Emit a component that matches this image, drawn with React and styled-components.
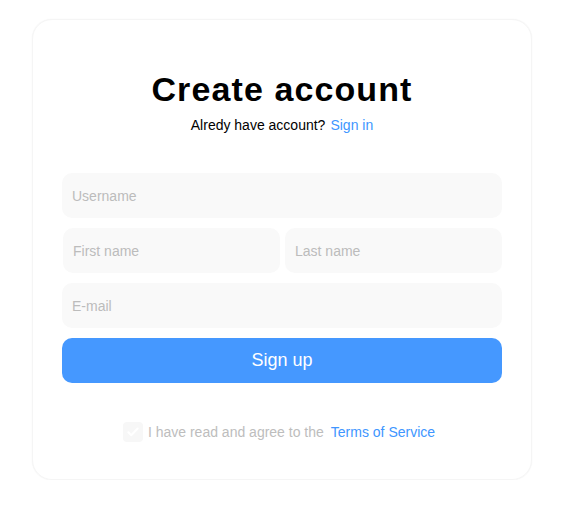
import React from "react";
import styled, { createGlobalStyle } from "styled-components";

const GlobalStyle = createGlobalStyle`
  body {
    margin: 0;
    background: #fff;
    font-family: "Liberation Sans", Arial, sans-serif;
  }
`;

const Page = styled.div`
  padding: 19px 36px 0 32px;
`;

const Card = styled.div`
  box-sizing: border-box;
  width: 500px;
  height: 461px;
  border: 1px solid #f5f5f5;
  border-radius: 20px;
  box-shadow: 0 0 1px rgba(0, 0, 0, 0.1);
  padding: 49px 29px 0;
  display: flex;
  flex-direction: column;
  align-items: stretch;
`;

const Title = styled.h1`
  margin: 0;
  text-align: center;
  font-size: 34px;
  line-height: 40px;
  font-weight: 700;
  letter-spacing: 1.1px;
  color: #000;
`;

const Subtitle = styled.p`
  margin: 8px 0 0;
  text-align: center;
  font-size: 14px;
  line-height: 16px;
  color: #000;
`;

const Link = styled.a`
  color: #4096ff;
  text-decoration: none;
  margin-left: ${(p) => p.$gap || 5}px;
  cursor: pointer;
`;

const Form = styled.form`
  margin-top: 40px;
  display: flex;
  flex-direction: column;
  gap: 10px;
`;

const Row = styled.div`
  display: grid;
  grid-template-columns: 1fr 1fr;
  gap: 5px;
  padding-left: 1px;
`;

const Input = styled.input`
  box-sizing: border-box;
  width: 100%;
  height: 45px;
  border: none;
  outline: none;
  border-radius: 10px;
  background: #f9f9f9;
  padding: 0 10px;
  font-family: inherit;
  font-size: 14px;
  color: #333;
  &::placeholder {
    color: #bcbcbc;
  }
`;

const Button = styled.button`
  height: 45px;
  border: none;
  border-radius: 10px;
  background: #4598ff;
  color: #fff;
  font-family: inherit;
  font-size: 18px;
  cursor: pointer;
`;

const Agree = styled.label`
  margin-top: 39px;
  display: flex;
  align-items: center;
  justify-content: center;
  font-size: 14px;
  color: #bdbdbd;
  padding-right: 6px;
`;

const Check = styled.span`
  width: 20px;
  height: 20px;
  border-radius: 4px;
  background: #f7f7f7;
  display: flex;
  align-items: center;
  justify-content: center;
  margin-right: 5px;
`;

export default function App() {
  return (
    <>
      <GlobalStyle />
      <Page>
        <Card>
          <Title>Create account</Title>
          <Subtitle>
            Alredy have account?<Link>Sign in</Link>
          </Subtitle>
          <Form onSubmit={(e) => e.preventDefault()}>
            <Input placeholder="Username" />
            <Row>
              <Input placeholder="First name" />
              <Input placeholder="Last name" />
            </Row>
            <Input placeholder="E-mail" />
            <Button type="submit">Sign up</Button>
          </Form>
          <Agree>
            <Check>
              <svg width="14" height="14" viewBox="0 0 24 24" fill="none">
                <path
                  d="M4 12.5l5 5L20 6"
                  stroke="#fff"
                  strokeWidth="3.5"
                  strokeLinecap="round"
                  strokeLinejoin="round"
                />
              </svg>
            </Check>
            I have read and agree to the<Link $gap={7}>Terms of Service</Link>
          </Agree>
        </Card>
      </Page>
    </>
  );
}
